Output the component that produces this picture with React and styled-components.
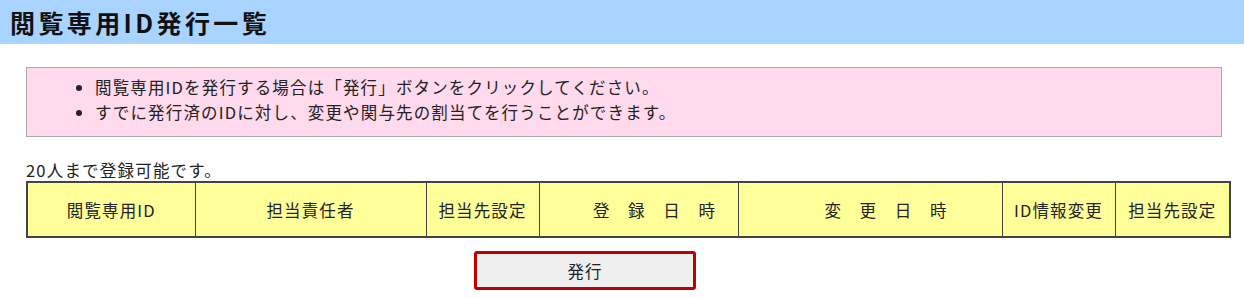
import React from 'react';
import styled, { createGlobalStyle } from 'styled-components';

const GlobalStyle = createGlobalStyle`
body {
  margin:0;
  background:#fff;
  font-family:"Noto Sans CJK JP", "Liberation Sans", sans-serif;
  color:#222;
}
`;

const TitleBar = styled.header`
height:44px;
background-color:#a8d4ff;
display:flex;
align-items:center;
padding-left:10px;
`;

const Title = styled.h1`
margin:0;
font-size:25px;
font-weight:700;
color:#111;
letter-spacing:3.4px;
`;

const Content = styled.main`
padding:23px 0 0 26px;
`;

const Notice = styled.div`
width:1194px;
height:68px;
background-color:#ffd9ec;
border:1px solid #aaa;
box-sizing:content-box;
`;

const NoticeList = styled.ul`
margin:0;
padding:7px 0 0 68px;
font-size:16.5px;
line-height:25px;
letter-spacing:1.15px;
color:#222;
`;

const Capacity = styled.p`
margin:22px 0 0;
font-size:16.5px;
line-height:22px;
letter-spacing:1.2px;
`;

const Table = styled.table`
width:1205px;
table-layout:fixed;
border-collapse:collapse;
border:2px solid #444;
`;

const HeadCell = styled.th`
width:${(p) => p.$w}px;
box-sizing:border-box;
height:55px;
padding:0 0 0 ${(p) => (p.$shift ? 32 : 0)}px;
background-color:#ffff99;
border:1px solid #444;
font-size:16.5px;
font-weight:400;
letter-spacing:1.1px;
color:#222;
text-align:center;
white-space:pre;
`;

const ButtonRow = styled.div`
display:flex;
padding:13px 0 0 448px;
`;

const IssueButton = styled.button`
width:222px;
height:39px;
background-color:#efefef;
border:3px solid #c00000;
border-radius:3px;
font-family:inherit;
font-size:16.5px;
letter-spacing:1px;
color:#222;
cursor:pointer;
`;

const columns = [
  { label: '閲覧専用ID', w: 168 },
  { label: '担当責任者', w: 231 },
  { label: '担当先設定', w: 113 },
  { label: '登　録　日　時', w: 199, shift: true },
  { label: '変　更　日　時', w: 264, shift: true },
  { label: 'ID情報変更', w: 113 },
  { label: '担当先設定', w: 115 },
];

function App() {
  return (
    <>
      <GlobalStyle />
      <TitleBar>
        <Title>閲覧専用ID発行一覧</Title>
      </TitleBar>
      <Content>
        <Notice>
          <NoticeList>
            <li>閲覧専用IDを発行する場合は「発行」ボタンをクリックしてください。</li>
            <li>すでに発行済のIDに対し、変更や関与先の割当てを行うことができます。</li>
          </NoticeList>
        </Notice>
        <Capacity>20人まで登録可能です。</Capacity>
        <Table>
          <thead>
            <tr>
              {columns.map((c, i) => (
                <HeadCell key={i} $w={c.w} $shift={c.shift}>{c.label}</HeadCell>
              ))}
            </tr>
          </thead>
        </Table>
        <ButtonRow>
          <IssueButton>発行</IssueButton>
        </ButtonRow>
      </Content>
    </>
  );
}

export default App;
